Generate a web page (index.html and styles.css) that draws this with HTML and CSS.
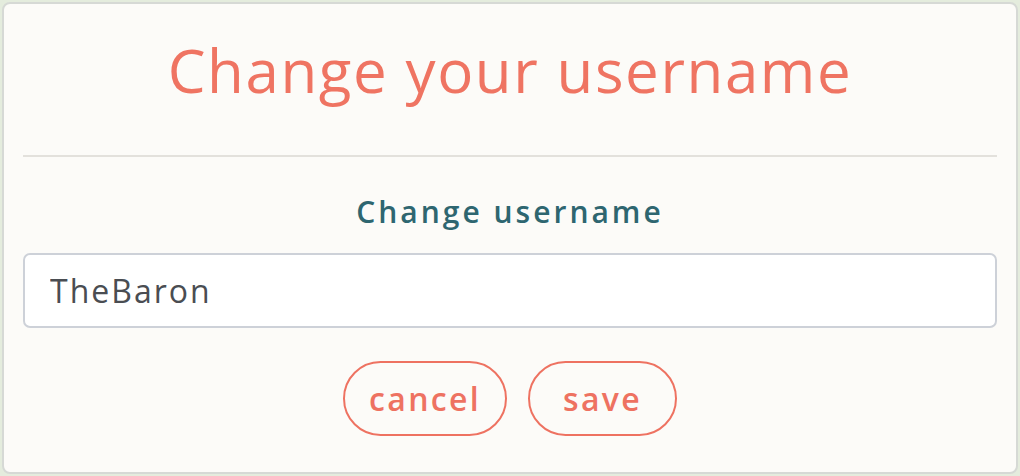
FILE: index.html
```html
<!DOCTYPE html>
<html>
<head>
<meta charset="utf-8">
<link rel="stylesheet" href="styles.css">
</head>
<body>
<div class="modal">
  <div class="modal-header">
    <h1 class="title">Change your username</h1>
  </div>
  <div class="divider"></div>
  <form class="form">
    <label class="label" for="username">Change username</label>
    <input class="input" id="username" type="text" value="TheBaron">
    <div class="actions">
      <button type="button" class="btn btn-cancel">cancel</button>
      <button type="button" class="btn btn-save">save</button>
    </div>
  </form>
</div>
</body>
</html>
```
FILE: styles.css
```css
html, body {
  margin: 0;
  padding: 0;
}
body {
  width: 1020px;
  height: 476px;
  background: #e4ecdd;
  padding: 2px;
  box-sizing: border-box;
  font-family: "Open Sans", "Liberation Sans", sans-serif;
  overflow: hidden;
}
.modal {
  width: 1016px;
  height: 472px;
  box-sizing: border-box;
  background: #fcfbf8;
  border: 2px solid #d6d9d5;
  border-radius: 8px;
  padding: 0 19px;
  display: flex;
  flex-direction: column;
}
.modal-header {
  height: 151px;
  display: flex;
  align-items: center;
  justify-content: center;
}
.title {
  margin: 0;
  padding-bottom: 20px;
  font-size: 60px;
  font-weight: 400;
  color: #ef7462;
  letter-spacing: 1.6px;
  line-height: 1;
}
.divider {
  height: 2px;
  background: #e3e1dc;
}
.form {
  display: flex;
  flex-direction: column;
  align-items: stretch;
  padding-top: 38px;
}
.label {
  text-align: center;
  font-size: 30px;
  line-height: 34px;
  font-weight: 600;
  color: #2e6670;
  letter-spacing: 3px;
}
.input {
  margin-top: 24px;
  height: 75px;
  box-sizing: border-box;
  border: 2px solid #cdd1d8;
  border-radius: 7px;
  background: #fff;
  padding: 0 25px;
  font-family: "Open Sans", "Liberation Sans", sans-serif;
  font-size: 32px;
  color: #4a4d52;
  letter-spacing: 2px;
  outline: none;
}
.actions {
  margin-top: 33px;
  display: flex;
  justify-content: center;
  gap: 21px;
}
.btn {
  height: 75px;
  box-sizing: border-box;
  border: 2px solid #ee7261;
  border-radius: 38px;
  background: transparent;
  color: #ee7261;
  font-family: "Open Sans", "Liberation Sans", sans-serif;
  font-size: 32px;
  font-weight: 600;
  letter-spacing: 2.3px;
  padding: 0;
  cursor: pointer;
}
.btn-cancel {
  width: 164px;
}
.btn-save {
  width: 149px;
}
```
